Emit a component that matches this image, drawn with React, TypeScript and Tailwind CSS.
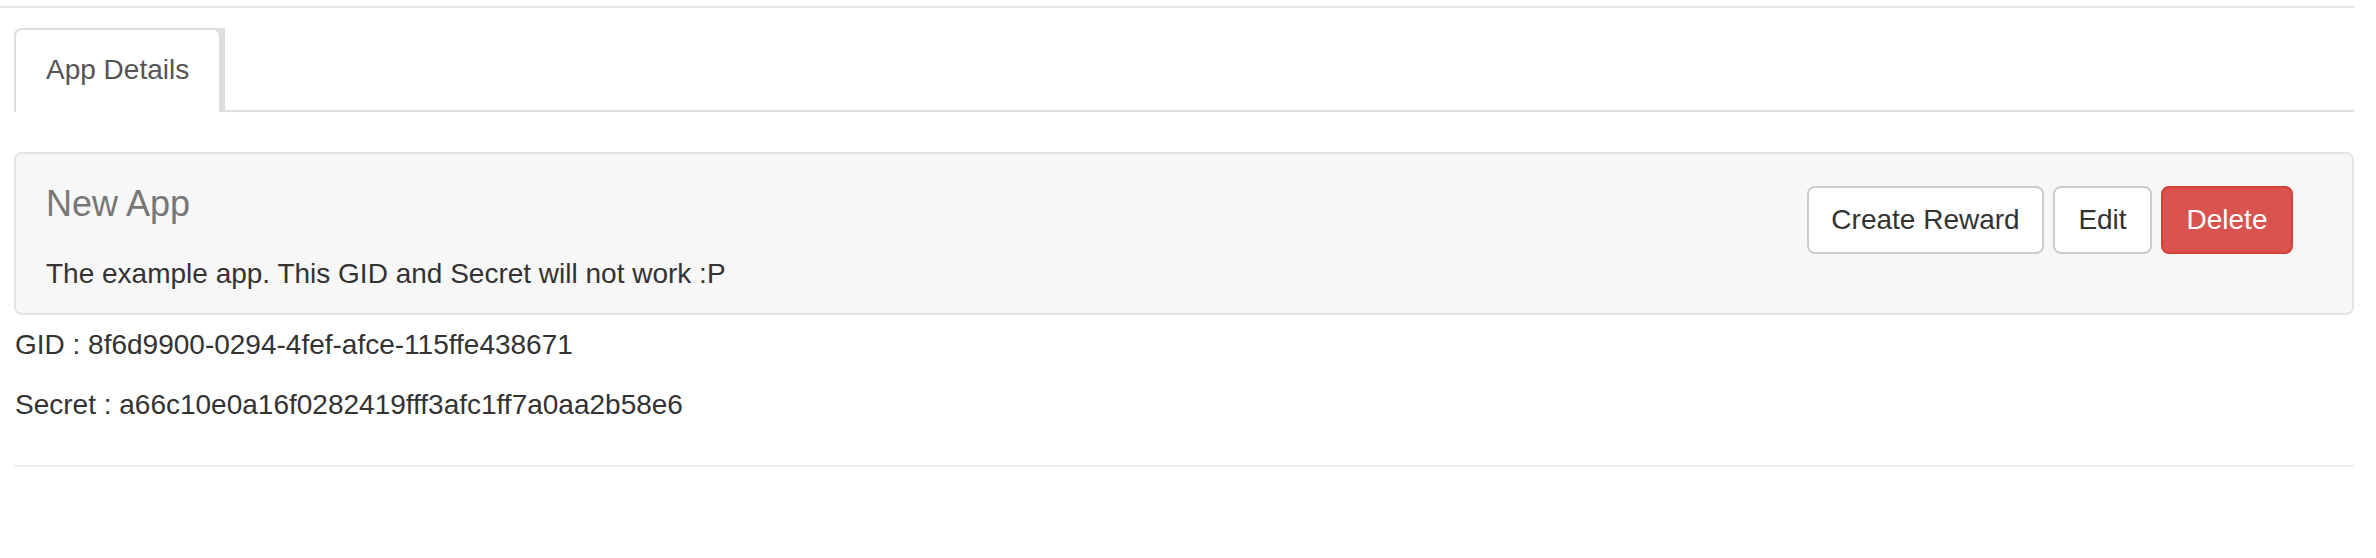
import React from 'react';

const font = { fontFamily: '"Liberation Sans", Arial, Helvetica, sans-serif' };

function Tabs() {
  return (
    <div className="flex items-end border-b-2 border-[#ddd] h-[84px] mt-[20px]">
      {/* active tab, sitting on the line */}
      <div className="bg-[#ddd] pr-[4px] -mb-[2px] rounded-tl-[8px]">
        <div className="bg-white border-2 border-b-0 border-[#ddd] rounded-t-[8px] px-[30px] pt-[20px] pb-[22px] text-[28px] leading-[40px] text-[#555]">
          App Details
        </div>
      </div>
    </div>
  );
}

function AppWell() {
  return (
    <div className="mt-[40px] bg-[#f7f7f7] border-2 border-[#e3e3e3] rounded-[8px] flex justify-between pl-[30px] pr-[59px] pt-[30px] pb-[19px]">
      <div>
        <h4 className="text-[36px] leading-[40px] text-[#777]">New App</h4>
        <p className="mt-[30px] text-[28px] leading-[40px] text-[#333]">
          The example app. This GID and Secret will not work :P
        </p>
      </div>
      <div className="flex items-start gap-[9px] mt-[2px]">
        <button className="h-[68px] w-[237px] bg-white border-2 border-[#ccc] rounded-[8px] text-[28px] leading-[40px] text-[#333]">
          Create Reward
        </button>
        <button className="h-[68px] w-[99px] bg-white border-2 border-[#ccc] rounded-[8px] text-[28px] leading-[40px] text-[#333]">
          Edit
        </button>
        <button className="h-[68px] w-[132px] bg-[#d9534f] border-2 border-[#d43f3a] rounded-[8px] text-[28px] leading-[40px] text-white">
          Delete
        </button>
      </div>
    </div>
  );
}

export default function App() {
  return (
    <div className="w-full h-[558px] bg-white pr-[22px]" style={font}>
      <div className="mt-[6px] border-t-2 border-[#e5e5e5]" />
      <div className="pl-[14px]">
        <Tabs />
        <AppWell />
        <div className="pl-px text-[28px] leading-[40px] text-[#333]">
          <p className="mt-[10px] mb-[20px]">GID : 8f6d9900-0294-4fef-afce-115ffe438671</p>
          <p>Secret : a66c10e0a16f0282419fff3afc1ff7a0aa2b58e6</p>
        </div>
        <div className="mt-[40px] border-t-2 border-[#eee]" />
      </div>
    </div>
  );
}
